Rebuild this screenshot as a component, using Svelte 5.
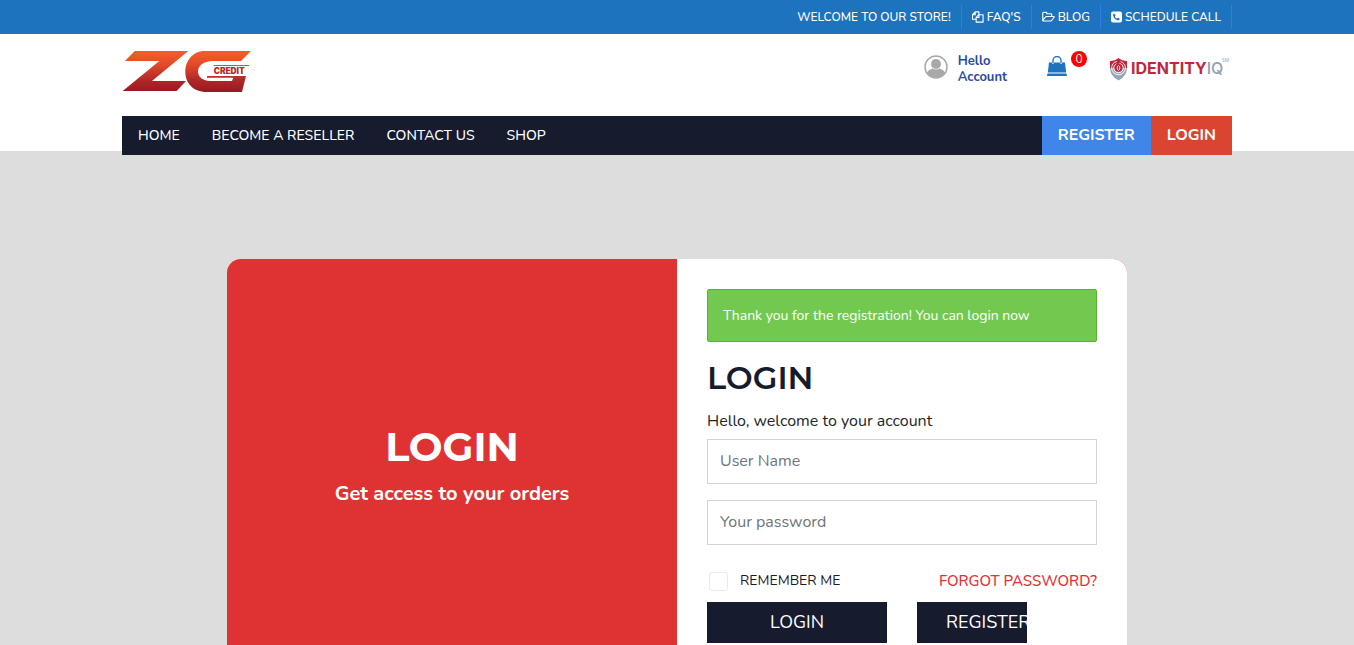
<script>
  const navLinks = ['HOME', 'BECOME A RESELLER', 'CONTACT US', 'SHOP'];
  let cartCount = $state(0);
  let username = $state('');
  let password = $state('');
  let remember = $state(false);
</script>

<div class="topbar">
  <div class="container topbar-row">
    <span class="top-item">WELCOME TO OUR STORE!</span>
    <a class="top-item" href="#faqs">
      <svg width="12" height="12" viewBox="0 0 13 12" fill="none" stroke="currentColor" stroke-width="1.200" stroke-linejoin="round" aria-hidden="true">
        <path d="M4.5 8.5h-4v-5l3-3h4v3M3.5 .5v3h-3M7.500 3.500h4.500v8h-7.500v-5l3-3v3h-3" />
      </svg>
      FAQ'S
    </a>
    <a class="top-item" href="#blog">
      <svg width="13" height="12" viewBox="0 0 14 12" fill="none" stroke="currentColor" stroke-width="1.200" stroke-linejoin="round" aria-hidden="true">
        <path d="M.8 9.500V2q0-1 1-1h2.400q1 0 1 1v.5h4.300q1 0 1 1v2M.8 9.800l2.800-3.600q.5-.7 1.400-.7h7.600q1 0 .4.800l-2.400 3.200q-.5.800-1.500.800H1.500q-1 0-.7-.5" />
      </svg>
      BLOG
    </a>
    <a class="top-item" href="#schedule">
      <svg width="11" height="12" viewBox="0 0 11 12" aria-hidden="true">
        <rect y=".5" width="11" height="11" rx="2" fill="#fff" />
        <path d="M3.300 2.500 2.200 3.300c-.3 3.400 2.600 6.300 6 6l.6-1.500-1.900-1.100-.9.900C4.900 7.100 4.300 6.400 3.900 5.500l.8-.9z" fill="#1e73be" />
      </svg>
      SCHEDULE CALL
    </a>
  </div>
</div>

<header>
  <div class="container">
    <div class="brand-row">
      <a class="logo" href="#home" aria-label="ZG Credit">
        <svg width="130" height="43" viewBox="0 0 390 129">
          <defs>
            <linearGradient id="flame" x1="0" y1="0" x2="0" y2="129" gradientUnits="userSpaceOnUse">
              <stop offset=".1" stop-color="#f15a29" />
              <stop offset=".35" stop-color="#e04a2a" />
              <stop offset=".7" stop-color="#b02828" />
              <stop offset=".95" stop-color="#9a1a22" />
            </linearGradient>
          </defs>
          <g fill="url(#flame)">
            <path d="M38 3H199L90 93H192L164 123H2L112 33H9Z" />
            <path d="M387 3 357 33H268C242 35 228 49 228 64 228 81 242 93 265 93H330L334 83H255V78H372L360 126H255C211 126 190 97 190 66 190 30 215 3 247 3Z" />
            <path d="M275 45H381V48H275Z" />
          </g>
          <text x="275" y="72" font-size="25" fill="#b52a28" class="logo-word">CREDIT</text>
        </svg>
      </a>

      <div class="tools">
        <a class="account" href="#account">
          <svg width="24" height="24" viewBox="0 0 24 24" aria-hidden="true">
            <circle cx="12" cy="12" r="11" fill="#fff" stroke="#a9a9a9" stroke-width="1.500" />
            <circle cx="12" cy="9" r="5" fill="#a9a9a9" />
            <path d="M3 17.500Q4.500 14.500 8.500 13.500 12 15.500 15.500 13.500q4 1 5.500 4a10.500 10.500 0 0 1-18 0Z" fill="#a9a9a9" />
          </svg>
          <span>Hello<br />Account</span>
        </a>
        <a class="cart" href="#cart" aria-label="Cart">
          <svg width="20" height="20" viewBox="0 0 20 20" aria-hidden="true">
            <path d="M2 6.500H18L19.200 16.500H.8ZM.5 17.500h19L20 20H0Z" fill="#1e73be" />
            <path d="M6 9V4.500a4 4 0 0 1 8 0V9" fill="none" stroke="#1e73be" stroke-width="1.400" />
            <path d="M6 6.500V8M14 6.500V8" stroke="#fff" stroke-width="1.200" />
          </svg>
          <span class="badge">{cartCount}</span>
        </a>
        <a class="partner" href="#identityiq" aria-label="IdentityIQ">
          <svg width="123" height="26" viewBox="0 0 123 26">
            <path d="M1 5Q6 5 9.500 2 13 5 18 5V12H1Z" fill="#c0273b" />
            <path d="M1 12H18Q18 20 9.500 24.500 1 20 1 12Z" fill="#98a6b3" />
            <g fill="none" stroke="#fff" stroke-width=".9">
              <circle cx="9.500" cy="12" r="6.800" stroke-dasharray="30 4" />
              <circle cx="9.500" cy="12" r="4.800" stroke-dasharray="20 3" />
            </g>
            <circle cx="9.500" cy="12" r="3.800" fill="#c0273b" />
            <ellipse cx="9.500" cy="12" rx="1.300" ry="2.300" fill="none" stroke="#fff" stroke-width=".8" />
            <text x="22" y="18" class="partner-word"><tspan fill="#c0273b" font-weight="700">IDENTITY</tspan><tspan fill="#8fa1af" font-weight="500">IQ</tspan></text>
            <text x="113" y="6" class="partner-mark">SM</text>
          </svg>
        </a>
      </div>
    </div>

    <nav>
      {#each navLinks as link}
        <a class="nav-link" href="#{link.toLowerCase().replaceAll(' ', '-')}">{link}</a>
      {/each}
      <a class="nav-cta register" href="#register">REGISTER</a>
      <a class="nav-cta login" href="#login">LOGIN</a>
    </nav>
  </div>
</header>

<main>
  <div class="card">
    <section class="intro">
      <h1>LOGIN</h1>
      <p>Get access to your orders</p>
    </section>
    <form class="panel" onsubmit={(e) => e.preventDefault()}>
      <div class="notice" role="status">Thank you for the registration! You can login now</div>
      <h2>LOGIN</h2>
      <p class="welcome">Hello, welcome to your account</p>
      <input class="field" type="text" placeholder="User Name" aria-label="User Name" bind:value={username} />
      <input class="field" type="password" placeholder="Your password" aria-label="Your password" bind:value={password} />
      <div class="options">
        <label><input type="checkbox" bind:checked={remember} />REMEMBER ME</label>
        <a href="#forgot">FORGOT PASSWORD?</a>
      </div>
      <div class="actions">
        <button type="submit">LOGIN</button>
        <a class="signup" href="#register">REGISTER</a>
      </div>
    </form>
  </div>
</main>

<style>
  :global(body) {
    background: #ddd;
    font-family: Nunito, Lato, sans-serif;
    color: #171b2e;
  }
  :global(*) {
    box-sizing: border-box;
  }
  a {
    color: inherit;
    text-decoration: none;
  }
  svg {
    display: block;
    flex: none;
  }
  h1, h2, p {
    margin: 0;
  }
  .container {
    max-width: 1110px;
    margin: 0 auto;
  }

  .topbar {
    background: #1e73be;
    color: #fff;
  }
  .topbar-row {
    display: flex;
    justify-content: flex-end;
    padding: 5px 0;
  }
  .top-item {
    display: flex;
    align-items: center;
    gap: 3px;
    padding: 0 10px;
    border-right: 1px solid #2f7de6;
    font-size: 12px;
    font-weight: 500;
    line-height: 24px;
    white-space: nowrap;
  }

  header {
    background: #fff;
    height: 117px;
  }
  .brand-row {
    display: flex;
    justify-content: space-between;
    height: 82px;
    padding-top: 16px;
  }
  .logo-word {
    font-family: Inter, sans-serif;
    font-weight: 900;
  }
  .tools {
    display: flex;
    align-items: flex-start;
  }
  .account {
    display: flex;
    gap: 10px;
    padding-top: 3px;
    margin-right: 40px;
    color: #2a4aa0;
    font-size: 13px;
    font-weight: 700;
    line-height: 16px;
  }
  .account svg {
    margin-top: 2px;
  }
  .cart {
    display: flex;
    gap: 4px;
    margin-right: 22px;
  }
  .cart svg {
    margin-top: 6px;
  }
  .badge {
    width: 16px;
    height: 16px;
    margin-top: 1px;
    border-radius: 50%;
    background: #f00;
    color: #fff;
    font-size: 12px;
    line-height: 17px;
    text-align: center;
  }
  .partner {
    padding-top: 6px;
  }
  .partner-word {
    font-family: Inter, sans-serif;
    font-size: 16px;
  }
  .partner-mark {
    font-family: "Open Sans", sans-serif;
    font-size: 5px;
    fill: #8fa1af;
  }

  nav {
    display: flex;
    background: #171b2e;
    color: #fff;
    line-height: 39px;
    white-space: nowrap;
  }
  .nav-link {
    padding: 0 16px;
    font-size: 14px;
    font-weight: 500;
  }
  .nav-cta {
    padding: 0 16px;
    font-size: 16px;
    font-weight: 700;
  }
  .register {
    margin-left: auto;
    background: #3f86e8;
  }
  .login {
    background: #dc4432;
  }

  main {
    padding: 108px 20px;
  }
  .card {
    display: grid;
    grid-template-columns: 1fr 1fr;
    max-width: 900px;
    margin: 0 auto;
    border-radius: 14px;
    overflow: hidden;
    background: #df3333;
  }
  .intro {
    display: flex;
    flex-direction: column;
    align-items: center;
    justify-content: center;
    gap: 8px;
    color: #fff;
  }
  h1 {
    font: 700 40px/48px Montserrat, Inter, sans-serif;
  }
  .intro p {
    font-size: 20px;
    font-weight: 700;
    line-height: 30px;
  }
  .panel {
    padding: 30px;
    background: #fff;
  }
  .notice {
    padding: 15px;
    border: 1px solid #55b52d;
    border-radius: 2px;
    background: #73c950;
    color: #fff;
    font-size: 14px;
    line-height: 21px;
  }
  h2 {
    margin-top: 16px;
    font: 600 32px/40px Montserrat, Inter, sans-serif;
  }
  .welcome {
    margin: 10px 0 5px;
    color: #212529;
    font-size: 16px;
    line-height: 26px;
  }
  .field {
    display: block;
    width: 100%;
    height: 45px;
    margin-bottom: 16px;
    padding: 0 12px 2px;
    border: 1px solid #ced4da;
    background: #fff;
    color: #495057;
    font-family: inherit;
    font-size: 16px;
  }
  .field::placeholder {
    color: #6c757d;
    opacity: 1;
  }
  .options {
    display: flex;
    justify-content: space-between;
    margin: 26px 0 11px;
    line-height: 20px;
  }
  .options label {
    display: flex;
    align-items: center;
    gap: 12px;
    font-size: 14px;
  }
  .options input {
    appearance: none;
    width: 19px;
    height: 19px;
    margin: 0 0 0 2px;
    border: 1px solid #e9e9f3;
    border-radius: 3px;
    background: #fff;
  }
  .options input:checked {
    background: #171b2e;
  }
  .options a {
    color: #df3333;
    font-size: 15px;
    font-weight: 500;
  }
  .actions {
    display: grid;
    grid-template-columns: 1fr 1fr;
    gap: 30px;
  }
  .actions button,
  .signup {
    height: 41px;
    padding: 0 0 1px;
    border: 0;
    background: #171b2e;
    color: #fff;
    font-family: inherit;
    font-size: 18px;
    line-height: 40px;
  }
  .signup {
    width: 110px;
    padding-left: 29px;
    overflow: hidden;
    white-space: nowrap;
  }
</style>
